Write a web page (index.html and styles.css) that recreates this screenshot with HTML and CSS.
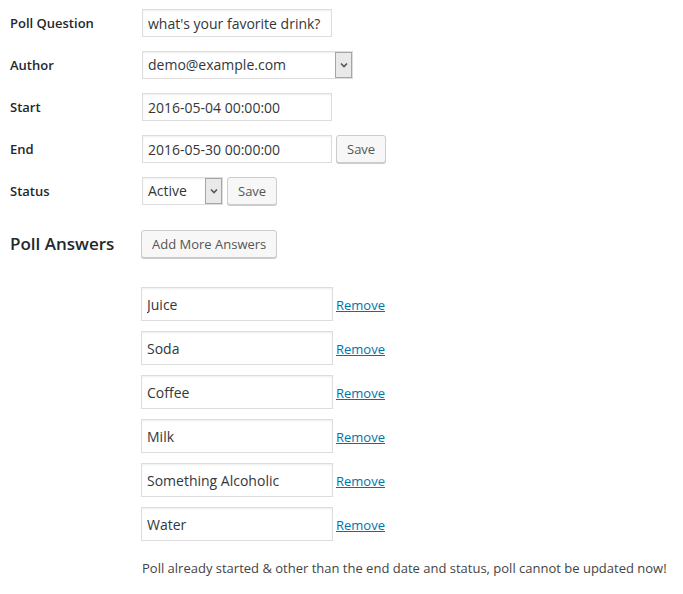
FILE: index.html
```html
<!DOCTYPE html>
<html lang="en">
<head>
<meta charset="utf-8">
<title>Poll</title>
<link rel="stylesheet" href="styles.css">
</head>
<body>
<div class="poll-form">
  <div class="row">
    <label class="label">Poll Question</label>
    <div class="field"><input class="text" style="width:190px" value="what's your favorite drink?"></div>
  </div>
  <div class="row">
    <label class="label">Author</label>
    <div class="field">
      <div class="select" style="width:211px"><span class="select-value">demo@example.com</span><span class="select-arrow"><svg width="8" height="6" viewBox="0 0 8 6"><path d="M1 1.5 L4 4.5 L7 1.5" fill="none" stroke="#555" stroke-width="1.6"/></svg></span></div>
    </div>
  </div>
  <div class="row">
    <label class="label">Start</label>
    <div class="field"><input class="text" style="width:190px" value="2016-05-04 00:00:00"></div>
  </div>
  <div class="row">
    <label class="label">End</label>
    <div class="field"><input class="text" style="width:190px" value="2016-05-30 00:00:00"><button class="button">Save</button></div>
  </div>
  <div class="row">
    <label class="label">Status</label>
    <div class="field">
      <div class="select" style="width:81px"><span class="select-value">Active</span><span class="select-arrow"><svg width="8" height="6" viewBox="0 0 8 6"><path d="M1 1.5 L4 4.5 L7 1.5" fill="none" stroke="#555" stroke-width="1.6"/></svg></span></div>
      <button class="button save-status">Save</button>
    </div>
  </div>
  <div class="row heading-row">
    <h2 class="heading">Poll Answers</h2>
    <div class="field"><button class="button">Add More Answers</button></div>
  </div>
  <div class="answers">
    <div class="answer"><input class="text answer-input" value="Juice"><a href="#" class="remove">Remove</a></div>
    <div class="answer"><input class="text answer-input" value="Soda"><a href="#" class="remove">Remove</a></div>
    <div class="answer"><input class="text answer-input" value="Coffee"><a href="#" class="remove">Remove</a></div>
    <div class="answer"><input class="text answer-input" value="Milk"><a href="#" class="remove">Remove</a></div>
    <div class="answer"><input class="text answer-input" value="Something Alcoholic"><a href="#" class="remove">Remove</a></div>
    <div class="answer"><input class="text answer-input" value="Water"><a href="#" class="remove">Remove</a></div>
  </div>
  <p class="notice">Poll already started &amp; other than the end date and status, poll cannot be updated now!</p>
</div>
</body>
</html>
```

FILE: styles.css
```css
* { box-sizing: border-box; }
html, body { margin: 0; padding: 0; background: #fff; }
body {
  font-family: "Open Sans", "Noto Sans", sans-serif;
  font-size: 13px;
  color: #444;
}
.poll-form {
  padding: 9px 0 0 10px;
}
.row {
  display: grid;
  grid-template-columns: 132px auto;
  align-items: center;
  height: 28px;
  margin-bottom: 14px;
}
.label {
  font-weight: 600;
  color: #23282d;
  font-size: 13px;
}
.field {
  display: flex;
  align-items: center;
  gap: 4px;
}
.text {
  height: 28px;
  border: 1px solid #ddd;
  box-shadow: inset 0 1px 2px rgba(0,0,0,.07);
  background: #fff;
  color: #32373c;
  font-family: "Open Sans", "Noto Sans", sans-serif;
  font-size: 14px;
  padding: 3px 5px;
  margin: 0;
  outline: none;
}
.select {
  height: 28px;
  border: 1px solid #ddd;
  box-shadow: inset 0 1px 2px rgba(0,0,0,.07);
  background: #fff;
  color: #32373c;
  font-size: 14px;
  display: flex;
  align-items: center;
  justify-content: space-between;
  padding-left: 5px;
}
.select-value { margin-top: -1px; }
.select-arrow {
  width: 17px;
  height: 26px;
  border: 1px solid #a6a6a6;
  background: #e9e9e9;
  display: flex;
  align-items: center;
  justify-content: center;
}
.save-status { margin-left: 1px; }
.button {
  height: 28px;
  padding: 0 10px 1px;
  border: 1px solid #ccc;
  border-radius: 3px;
  background: #f7f7f7;
  box-shadow: 0 1px 0 #ccc;
  color: #555;
  font-family: "Open Sans", "Noto Sans", sans-serif;
  font-size: 13px;
  line-height: 26px;
  margin: 0;
  cursor: pointer;
}
.heading-row {
  margin-top: 25px;
  margin-bottom: 29px;
  grid-template-columns: 131px auto;
}
.heading {
  margin: 0;
  font-size: 17px;
  font-weight: 600;
  color: #23282d;
  line-height: 28px;
}
.answers {
  margin-left: 131px;
  display: flex;
  flex-direction: column;
  gap: 10px;
}
.answer {
  display: flex;
  align-items: center;
  gap: 3px;
}
.answer-input {
  width: 192px;
  height: 34px;
}
.remove {
  color: #0073aa;
  text-decoration: underline;
  font-size: 13px;
  padding-top: 2px;
}
.notice {
  margin: 17px 0 0 132px;
  font-size: 13px;
  color: #444;
  line-height: 20px;
}
```
